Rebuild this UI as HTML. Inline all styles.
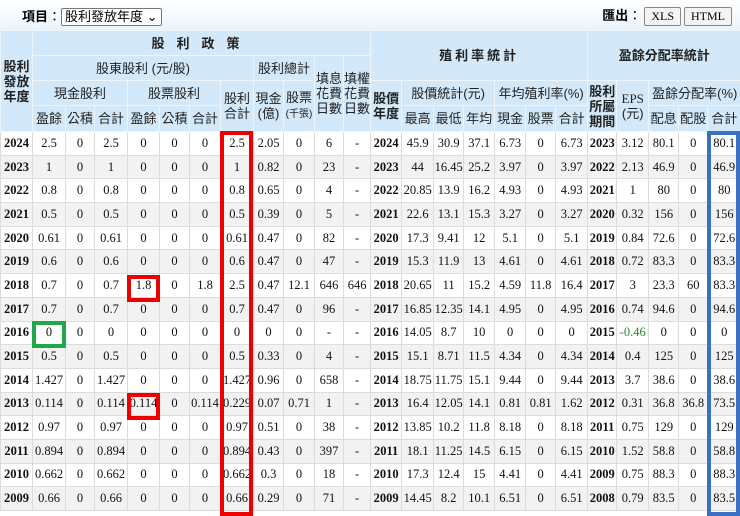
<!DOCTYPE html>
<html><head><meta charset="utf-8"><style>
body{margin:0;width:740px;height:512px;overflow:hidden;background:#fff;font-family:"Liberation Serif","Noto Serif CJK SC",serif;position:relative}
.top{height:30px;background:linear-gradient(#fff,#eaf4fc);position:relative;font-family:"Liberation Sans","Noto Sans CJK TC",sans-serif;font-size:13px}
.top .l{position:absolute;left:22px;top:6px}
.sel{display:inline-block;border:1px solid #777;border-radius:2px;padding:0 3px;background:#fff;font-size:13px;line-height:16px}
.top .r{position:absolute;right:8px;top:5px}
.btn{display:inline-block;border:1px solid #888;border-radius:2px;background:#f4f4f4;padding:0 6px;font-family:"Liberation Serif",serif;font-size:12px;line-height:17px;margin-left:3px}
table{border-collapse:collapse;table-layout:fixed;width:740px}
th{background:#d3e9f9;font-weight:normal;font-family:"Liberation Sans","Noto Sans CJK TC",sans-serif;font-size:13px;border:1px solid #eef6fc;padding:0;line-height:15px;color:#222;overflow:hidden}
td{font-size:12.5px;text-align:center;border:1px solid #dcdcdc;padding:0;height:22.7px;white-space:nowrap;overflow:hidden;color:#111}
td.y{font-weight:bold}
tr.g td{background:#f2f2f2}
.b{font-weight:bold}
.box{position:absolute;border:4px solid #e00;box-sizing:border-box}
</style></head><body>
<div class="top"><div class="l"><b>項目</b>：<span class="sel">股利發放年度 ⌄</span></div><div class="r"><b>匯出</b>：<span class="btn">XLS</span><span class="btn">HTML</span></div></div>
<table>
<colgroup><col style="width:32px"><col style="width:33px"><col style="width:29px"><col style="width:33px"><col style="width:32px"><col style="width:30px"><col style="width:31px"><col style="width:33px"><col style="width:30px"><col style="width:31px"><col style="width:29px"><col style="width:27px"><col style="width:31px"><col style="width:32px"><col style="width:30px"><col style="width:31px"><col style="width:31px"><col style="width:30px"><col style="width:32px"><col style="width:29px"><col style="width:32px"><col style="width:30px"><col style="width:29px"><col style="width:33px"></colgroup>
<tr style="height:25px"><th rowspan="4" class="b">股利<br>發放<br>年度</th><th colspan="11" class="b" style="letter-spacing:12px">股利政策</th><th colspan="7" rowspan="2" class="b" style="letter-spacing:3px">殖利率統計</th><th colspan="5" rowspan="2" class="b">盈餘分配率統計</th></tr>
<tr style="height:25px"><th colspan="7">股東股利 (元/股)</th><th colspan="2">股利總計</th><th rowspan="3">填息<br>花費<br>日數</th><th rowspan="3">填權<br>花費<br>日數</th></tr>
<tr style="height:25px"><th colspan="3">現金股利</th><th colspan="3">股票股利</th><th rowspan="2">股利<br>合計</th><th rowspan="2">現金<br>(億)</th><th rowspan="2">股票<br><span style="font-size:10px">(千張)</span></th><th rowspan="2" class="b">股價<br>年度</th><th colspan="3">股價統計(元)</th><th colspan="3">年均殖利率(%)</th><th rowspan="2" class="b">股利<br>所屬<br>期間</th><th rowspan="2"><span style="font-family:'Liberation Serif',serif">EPS</span><br>(元)</th><th colspan="3">盈餘分配率(%)</th></tr>
<tr style="height:26px"><th>盈餘</th><th>公積</th><th>合計</th><th>盈餘</th><th>公積</th><th>合計</th><th>最高</th><th>最低</th><th>年均</th><th>現金</th><th>股票</th><th>合計</th><th>配息</th><th>配股</th><th>合計</th></tr>
<tbody id="tb"></tbody>
</table>
<script>
var d=`2024,2.5,0,2.5,0,0,0,2.5,2.05,0,6,-,2024,45.9,30.9,37.1,6.73,0,6.73,2023,3.12,80.1,0,80.1
2023,1,0,1,0,0,0,1,0.82,0,23,-,2023,44,16.45,25.2,3.97,0,3.97,2022,2.13,46.9,0,46.9
2022,0.8,0,0.8,0,0,0,0.8,0.65,0,4,-,2022,20.85,13.9,16.2,4.93,0,4.93,2021,1,80,0,80
2021,0.5,0,0.5,0,0,0,0.5,0.39,0,5,-,2021,22.6,13.1,15.3,3.27,0,3.27,2020,0.32,156,0,156
2020,0.61,0,0.61,0,0,0,0.61,0.47,0,82,-,2020,17.3,9.41,12,5.1,0,5.1,2019,0.84,72.6,0,72.6
2019,0.6,0,0.6,0,0,0,0.6,0.47,0,47,-,2019,15.3,11.9,13,4.61,0,4.61,2018,0.72,83.3,0,83.3
2018,0.7,0,0.7,1.8,0,1.8,2.5,0.47,12.1,646,646,2018,20.65,11,15.2,4.59,11.8,16.4,2017,3,23.3,60,83.3
2017,0.7,0,0.7,0,0,0,0.7,0.47,0,96,-,2017,16.85,12.35,14.1,4.95,0,4.95,2016,0.74,94.6,0,94.6
2016,0,0,0,0,0,0,0,0,0,-,-,2016,14.05,8.7,10,0,0,0,2015,-0.46,0,0,0
2015,0.5,0,0.5,0,0,0,0.5,0.33,0,4,-,2015,15.1,8.71,11.5,4.34,0,4.34,2014,0.4,125,0,125
2014,1.427,0,1.427,0,0,0,1.427,0.96,0,658,-,2014,18.75,11.75,15.1,9.44,0,9.44,2013,3.7,38.6,0,38.6
2013,0.114,0,0.114,0.114,0,0.114,0.229,0.07,0.71,1,-,2013,16.4,12.05,14.1,0.81,0.81,1.62,2012,0.31,36.8,36.8,73.5
2012,0.97,0,0.97,0,0,0,0.97,0.51,0,38,-,2012,13.85,10.2,11.8,8.18,0,8.18,2011,0.75,129,0,129
2011,0.894,0,0.894,0,0,0,0.894,0.43,0,397,-,2011,18.1,11.25,14.5,6.15,0,6.15,2010,1.52,58.8,0,58.8
2010,0.662,0,0.662,0,0,0,0.662,0.3,0,18,-,2010,17.3,12.4,15,4.41,0,4.41,2009,0.75,88.3,0,88.3
2009,0.66,0,0.66,0,0,0,0.66,0.29,0,71,-,2009,14.45,8.2,10.1,6.51,0,6.51,2008,0.79,83.5,0,83.5`.split('\n');
var h='';d.forEach(function(r,i){var c=r.split(',');h+='<tr'+(i%2?' class="g"':'')+'>';c.forEach(function(v,j){var cls=(j==0||j==12||j==19)?' class="y"':'';var st=(j==20&&v[0]=='-')?' style="color:#2a8a2a"':'';h+='<td'+cls+st+'>'+v+'</td>'});h+='</tr>'});
document.getElementById('tb').innerHTML=h;
</script>
<div class="box" style="left:220px;top:131px;width:33px;height:385px"></div>
<div class="box" style="left:127px;top:275px;width:33px;height:27px"></div>
<div class="box" style="left:127px;top:393px;width:33px;height:27px"></div>
<div class="box" style="left:32px;top:321px;width:34px;height:27px;border-color:#1ea84a"></div>
<div class="box" style="left:707px;top:131px;width:33px;height:385px;border-color:#3b6fc4"></div>
</body></html>
